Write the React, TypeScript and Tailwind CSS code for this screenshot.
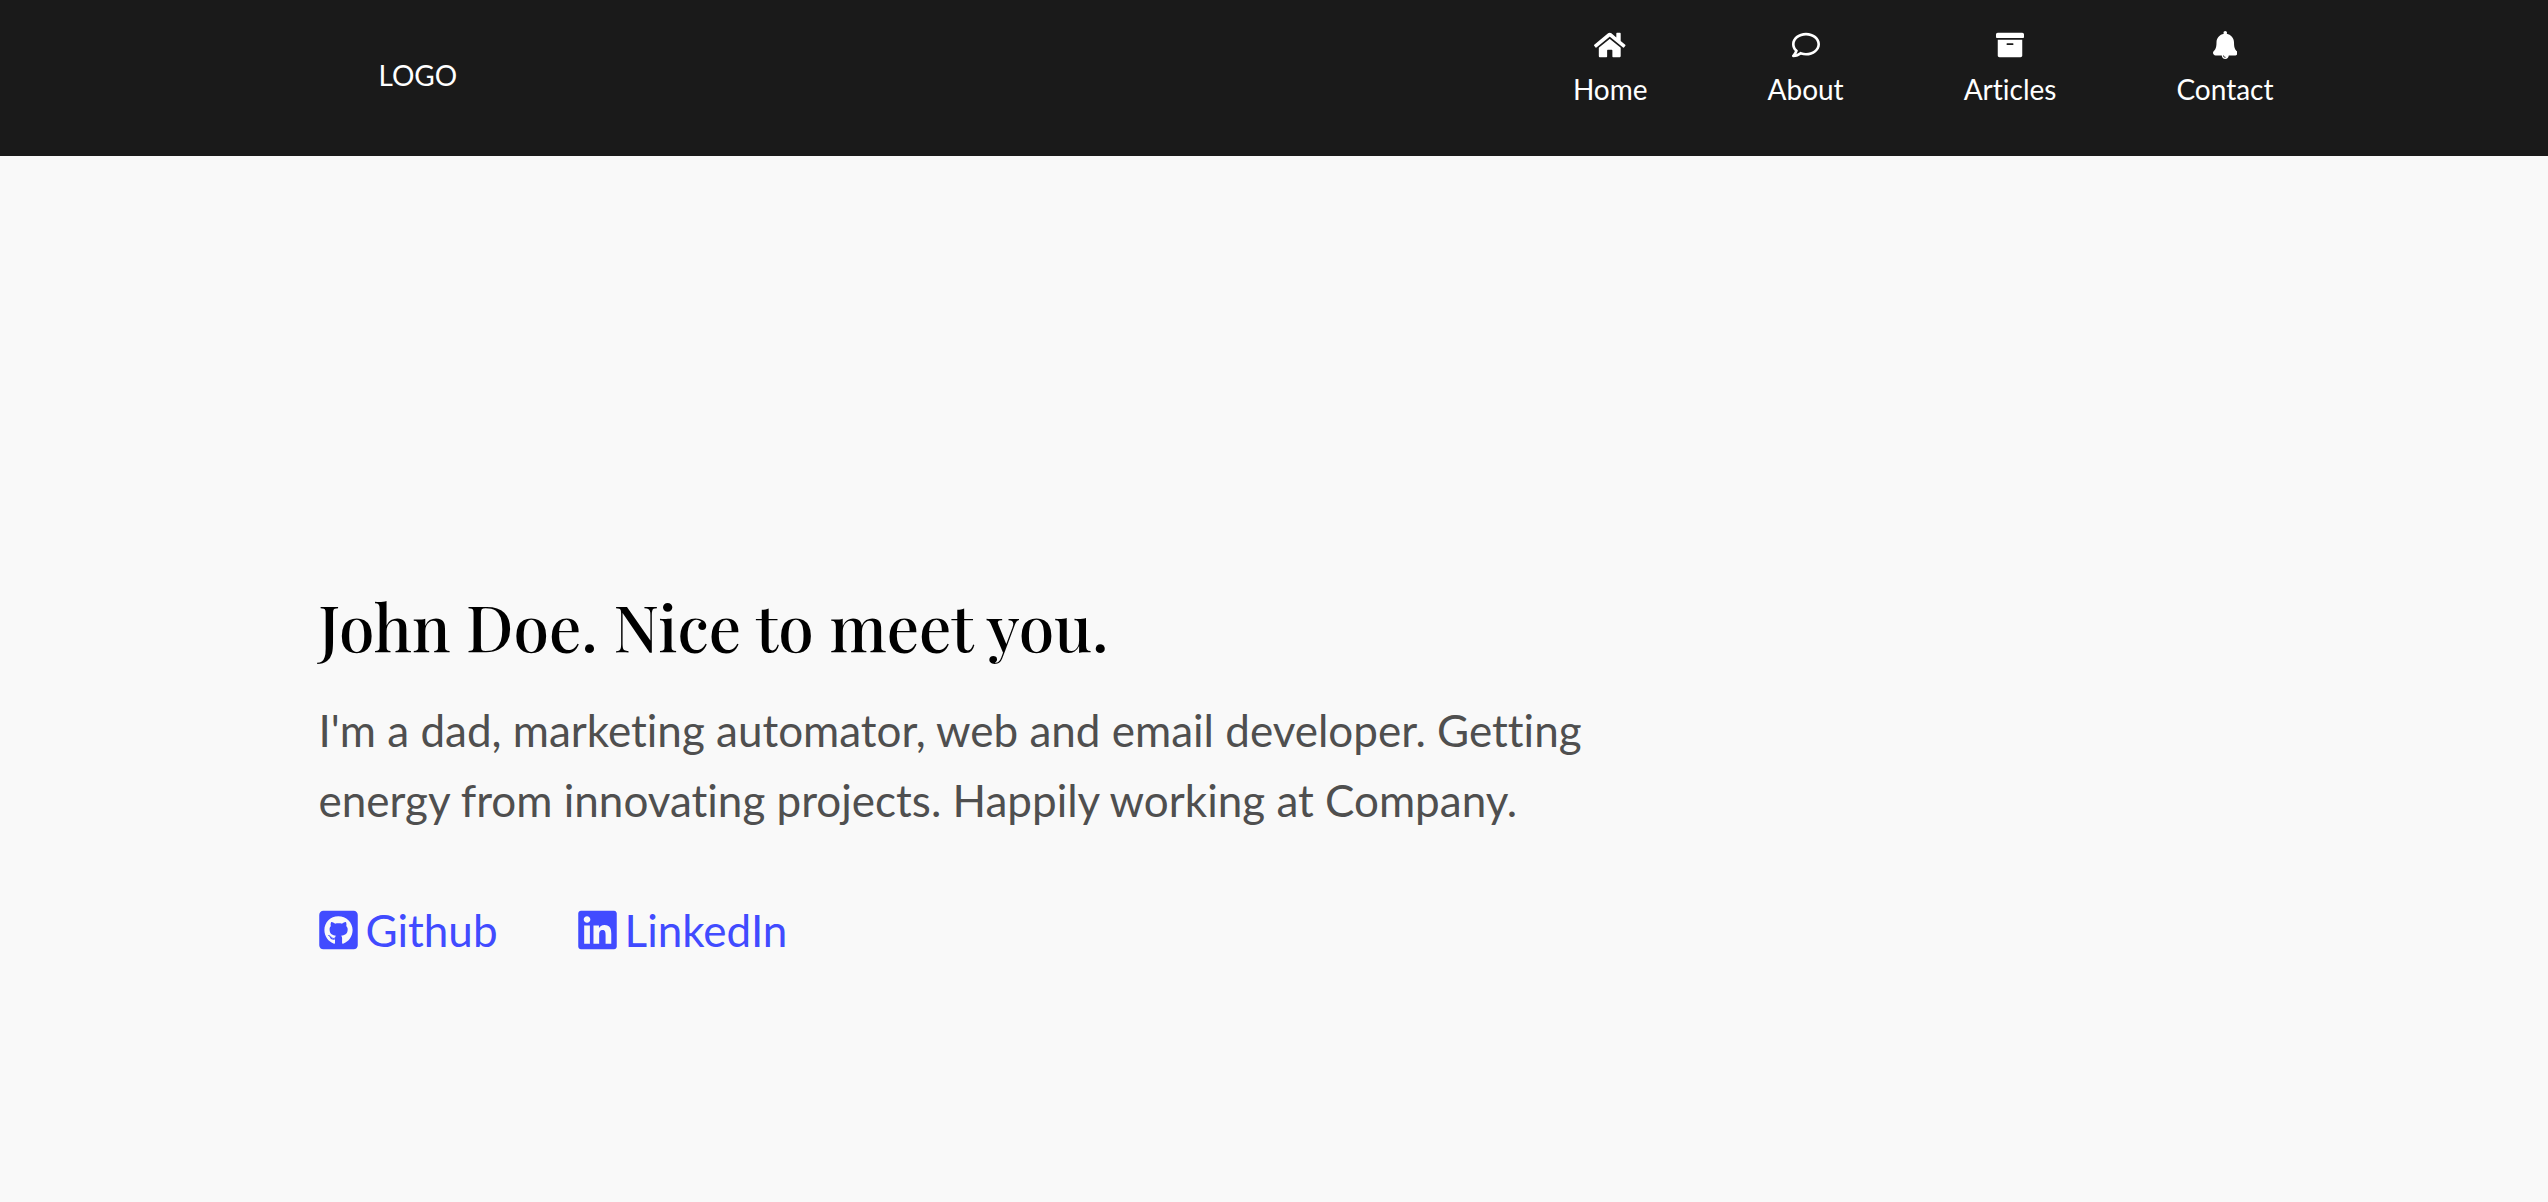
import type { ComponentType, SVGProps } from "react";
import { FaRegComment, FaArchive, FaGithubSquare, FaLinkedin } from "react-icons/fa";

type IconProps = SVGProps<SVGSVGElement>;

function HomeIcon(props: IconProps) {
  return (
    <svg viewBox="0 0 576 512" fill="currentColor" aria-hidden="true" {...props}>
      <path d="M488 312.7V456c0 13.3-10.7 24-24 24H348c-6.6 0-12-5.4-12-12V356c0-6.6-5.4-12-12-12h-72c-6.6 0-12 5.4-12 12v112c0 6.6-5.4 12-12 12H112c-13.3 0-24-10.7-24-24V312.7c0-3.6 1.6-7 4.4-9.3l188-154.8c4.4-3.6 10.8-3.6 15.3 0l188 154.8c2.7 2.3 4.3 5.7 4.3 9.3zm83.6-60.9L488 182.9V44.4c0-6.6-5.4-12-12-12h-56c-6.6 0-12 5.4-12 12V117l-89.5-73.7c-17.7-14.6-43.3-14.6-61 0L4.4 251.8c-5.1 4.2-5.8 11.8-1.6 16.9l25.5 31c4.2 5.1 11.8 5.8 16.9 1.6l235.2-193.7c4.4-3.6 10.8-3.6 15.3 0l235.2 193.7c5.1 4.2 12.7 3.5 16.9-1.6l25.5-31c4.2-5.2 3.4-12.7-1.7-16.9z" />
    </svg>
  );
}

function BellIcon(props: IconProps) {
  return (
    <svg viewBox="0 0 448 512" fill="currentColor" aria-hidden="true" {...props}>
      <path d="M433.884 366.059C411.634 343.809 384 316.118 384 208c0-79.394-57.831-145.269-133.663-157.83A31.845 31.845 0 0 0 256 32c0-17.673-14.327-32-32-32s-32 14.327-32 32c0 6.75 2.095 13.008 5.663 18.17C121.831 62.731 64 128.606 64 208c0 108.118-27.643 135.809-49.893 158.059C-16.042 396.208 5.325 448 48.048 448H160c0 35.346 28.654 64 64 64s64-28.654 64-64h111.943c42.638 0 64.151-51.731 33.941-81.941zM224 472a8 8 0 0 1 0 16c-22.056 0-40-17.944-40-40h16c0 13.234 10.766 24 24 24z" />
    </svg>
  );
}

const navItems: { label: string; Icon: ComponentType<{ className?: string }> }[] = [
  { label: "Home", Icon: HomeIcon },
  { label: "About", Icon: FaRegComment },
  { label: "Articles", Icon: FaArchive },
  { label: "Contact", Icon: BellIcon },
];

const socials = [
  { label: "Github", Icon: FaGithubSquare },
  { label: "LinkedIn", Icon: FaLinkedin },
];

export default function App() {
  return (
    <div className="flex min-h-screen flex-col bg-[#f9f9f9] font-['Lato',sans-serif] [font-variant-ligatures:none]">
      <header className="bg-[#1a1a1a] text-white">
        <div className="mx-auto flex w-3/4 items-start justify-between pb-[37px] pl-[60px]">
          <a href="#home" className="pt-[59px] text-[28px] leading-8">LOGO</a>
          <nav aria-label="Main" className="-mr-11 flex gap-[120px] pt-[31px]">
            {navItems.map(({ label, Icon }) => (
              <a key={label} href={"#" + label.toLowerCase()} className="flex flex-col items-center text-[28px] leading-[60px]">
                <Icon className="h-7 w-auto" />
                <span>{label}</span>
              </a>
            ))}
          </nav>
        </div>
      </header>
      <main className="mx-auto w-3/4 pt-[426px]">
        <h1 className="font-['Playfair_Display','Liberation_Serif',serif] text-[64px] font-medium leading-[88px] text-black">
          John Doe. Nice to meet you.
        </h1>
        <p className="mt-[25px] max-w-[1280px] text-[44px] leading-[70px] text-[#4f4f4f]">
          I'm a dad, marketing automator, web and email developer. Getting energy from innovating projects. Happily working at Company.
        </p>
        <div className="mt-[60px] flex gap-20">
          {socials.map(({ label, Icon }) => (
            <a key={label} href={"#" + label.toLowerCase()} className="flex items-center gap-2 text-[44px] leading-[70px] text-[#414bff]">
              <Icon className="h-11 w-[39px]" />
              <span>{label}</span>
            </a>
          ))}
        </div>
      </main>
    </div>
  );
}
